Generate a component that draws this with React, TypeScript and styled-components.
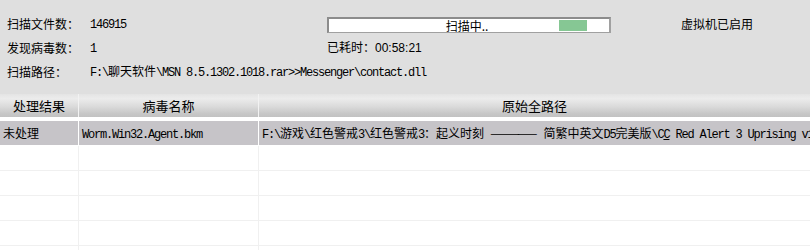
import React from 'react';
import styled, {createGlobalStyle} from "styled-components";

const GlobalStyle = createGlobalStyle`
    html, body {
        margin: 0;
        padding: 0;
        background: #ffffff;
    }
    body {
        font-family: "Noto Sans CJK SC", sans-serif;
        color: #000;
    }
`

const CJK = /([\u3000-\u303f\u3400-\u9fff\uff00-\uffef]+|\u2014+)/;

const Mixed = ({text}: { text: string }) => (
    <>
        {text.split(CJK).map((part, i) => {
            if (!part) return null;
            if (i % 2 === 0) return <Latin key={i}>{part}</Latin>;
            if (part[0] === '\u2014') return <Dash key={i}>{part}</Dash>;
            return <Han key={i}>{part}</Han>;
        })}
    </>
);

const rows = [
    {
        status: '未处理',
        name: 'Worm.Win32.Agent.bkm',
        path: 'F:\\游戏\\红色警戒3\\红色警戒3：起义时刻 ————— 简繁中英文D5完美版\\C',
        tail: ' Red Alert 3 Uprising v1.0 Final\\ra3ep1.exe',
    },
];

export default function App() {
    return (
        <>
            <GlobalStyle/>
            <Window>
                <ScanPanel>
                    <Label>扫描文件数：</Label>
                    <Line><Mixed text="146915"/></Line>
                    <Progress>
                        <ProgressText>扫描中..</ProgressText>
                        <ProgressChunk/>
                    </Progress>
                    <VmStatus>虚拟机已启用</VmStatus>

                    <Label>发现病毒数：</Label>
                    <Line><Mixed text="1"/></Line>
                    <Line><Han>已耗时：</Han><Clock>00:58:21</Clock></Line>
                    <span/>

                    <Label>扫描路径：</Label>
                    <PathLine><Mixed text="F:\聊天软件\MSN 8.5.1302.1018.rar>>Messenger\contact.dll"/></PathLine>
                </ScanPanel>

                <Table>
                    <HeadRow>
                        <HeadCell>处理结果</HeadCell>
                        <HeadCell>病毒名称</HeadCell>
                        <HeadCell>原始全路径</HeadCell>
                    </HeadRow>
                    <Body>
                        {rows.map((r, i) => (
                            <Row key={i} $filled>
                                <Cell $filled><Han>{r.status}</Han></Cell>
                                <Cell $filled><Mixed text={r.name}/></Cell>
                                <Cell $filled>
                                    <Mixed text={r.path}/>
                                    <Latin><u>C</u>{r.tail}</Latin>
                                </Cell>
                            </Row>
                        ))}
                        {[0, 1, 2, 3, 4].map(i => (
                            <Row key={'e' + i}>
                                <Cell/>
                                <Cell/>
                                <Cell/>
                            </Row>
                        ))}
                    </Body>
                </Table>
            </Window>
        </>
    );
}

const Window = styled.div`
    width: 810px;
    height: 250px;
    overflow: hidden;
    background: #ffffff;
`

const ScanPanel = styled.div`
    display: grid;
    grid-template-columns: 83px 237px 284px 1fr;
    grid-template-rows: 24px 24px 24px;
    height: 94px;
    box-sizing: border-box;
    padding: 11px 0 0 7px;
    background: #dfdfdf;
`

const Han = styled.span`
    font-family: "Noto Sans CJK SC", sans-serif;
    font-size: 12px;
    line-height: 16px;
    white-space: pre;
`

const Dash = styled(Han)`
    letter-spacing: -2.4px;
    padding-right: 2.4px;
`

const Latin = styled.span`
    position: relative;
    top: 2px;
    font-family: "Liberation Mono", monospace;
    font-size: 12px;
    line-height: 16px;
    letter-spacing: -1.2px;
    white-space: pre;
`

const Line = styled.div`
    display: flex;
    align-items: center;
    white-space: nowrap;
`

const Label = styled(Line)`
    font-size: 12px;
`

const PathLine = styled(Line)`
    grid-column: 2 / 5;
`

const Progress = styled.div`
    position: relative;
    margin-top: 6px;
    height: 16px;
    box-sizing: border-box;
    border-top: 2px solid #8c8c8c;
    border-left: 2px solid #8c8c8c;
    border-right: 2px solid #a0a0a0;
    border-bottom: 1px solid #a0a0a0;
    background: #ffffff;
    display: flex;
    align-items: center;
    justify-content: center;
`

const ProgressText = styled.span`
    font-size: 12px;
    line-height: 13px;
    margin-left: -4px;
`

const ProgressChunk = styled.div`
    position: absolute;
    left: 230px;
    top: 1px;
    width: 28px;
    height: 11px;
    background: #86c794;
`

const VmStatus = styled(Line)`
    font-size: 12px;
    padding-left: 70px;
`

const Clock = styled.span`
    position: relative;
    top: 1px;
    font-family: "Liberation Sans", sans-serif;
    font-size: 12px;
    line-height: 16px;
`

const Table = styled.div`
    display: flex;
    flex-direction: column;
    height: 156px;
    overflow: hidden;
`

const HeadRow = styled.div`
    flex-shrink: 0;
    display: grid;
    grid-template-columns: 78px 180px 1fr;
    height: 23px;
    background: linear-gradient(#e4e4e4 0%, #ececec 20%, #dadada 55%, #c7c7c7 85%, #c2c2c2 100%);
`

const HeadCell = styled.div`
    display: flex;
    align-items: center;
    justify-content: center;
    font-size: 13px;
    border-left: 1px solid #f2f2f2;

    &:first-child {
        border-left: none;
    }
`

const Body = styled.div`
    flex-shrink: 0;
    padding-top: 4px;
    background: #ffffff;
`

const Row = styled.div<{ $filled?: boolean }>`
    display: grid;
    grid-template-columns: 78px 180px 1fr;
    height: 25px;
    box-sizing: border-box;
    border-bottom: 1px solid ${p => p.$filled ? '#ffffff' : '#f0f0f0'};
`

const Cell = styled.div<{ $filled?: boolean }>`
    display: flex;
    align-items: center;
    padding-left: 3px;
    white-space: nowrap;
    overflow: hidden;
    background: ${p => p.$filled ? '#c6c4c8' : '#ffffff'};
    border-left: 1px solid ${p => p.$filled ? '#ffffff' : '#f0f0f0'};

    &:first-child {
        border-left: none;
    }
`
